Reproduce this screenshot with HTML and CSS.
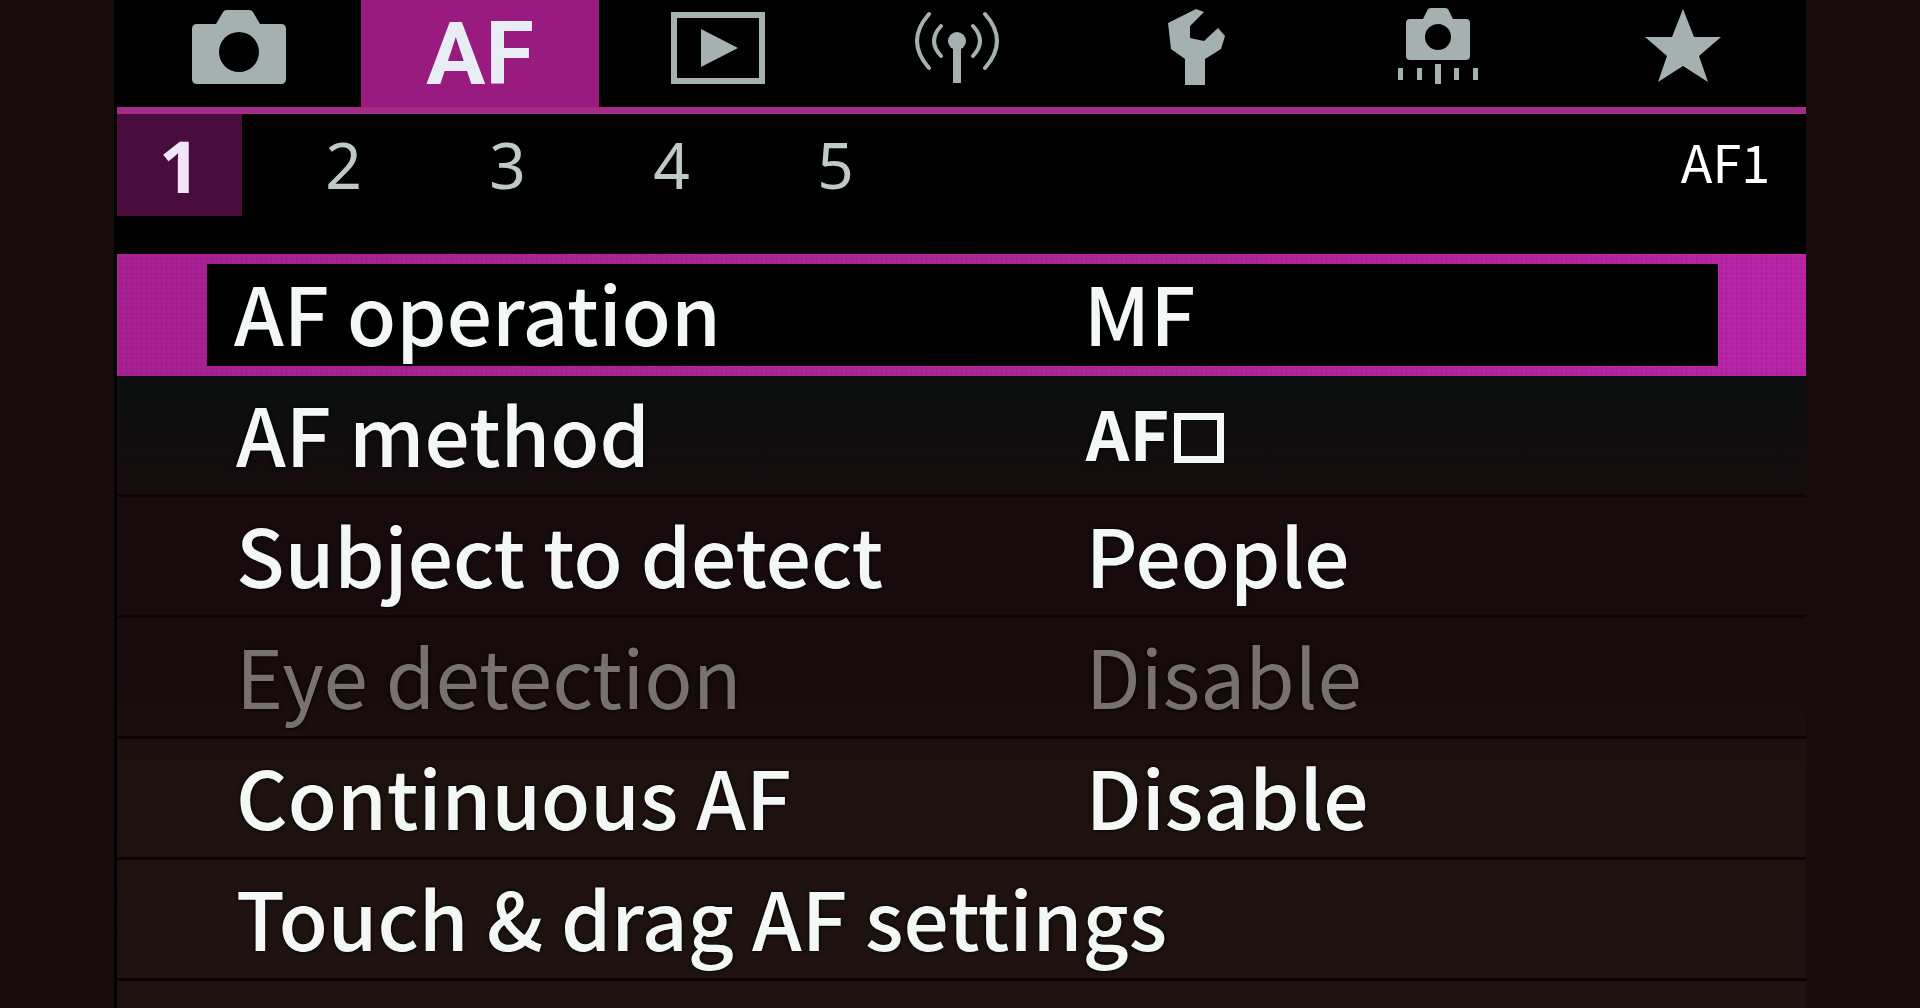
FILE: index.html
```html
<!DOCTYPE html>
<html lang="en">
<head>
  <meta charset="UTF-8" />
  <meta name="viewport" content="width=device-width, initial-scale=1.0"/>
  <title>AF settings</title>
  <link rel="stylesheet" href="styles.css">
</head>
<body>
  <div class="screen">
    <nav class="tabs">
      <button class="tab" aria-label="Shooting">
        <svg width="100" height="80" viewBox="0 0 100 80">
          <path fill-rule="evenodd" d="M8 16H27L34 4Q35 2 38 2H60Q63 2 64 4L71 16H92Q97 16 97 21V71Q97 76 92 76H8Q3 76 3 71V21Q3 16 8 16ZM50 24A20 20 0 1 0 50 64A20 20 0 1 0 50 24Z"/>
        </svg>
      </button>
      <button class="tab active">AF</button>
      <button class="tab" aria-label="Playback">
        <svg width="100" height="80" viewBox="0 0 100 80">
          <rect class="line" x="6" y="7" width="88" height="66" stroke-width="6"/>
          <path d="M33 21L70 40L33 59Z"/>
        </svg>
      </button>
      <button class="tab" aria-label="Wireless">
        <svg width="100" height="80" viewBox="0 0 100 80">
          <circle cx="50" cy="33" r="9"/>
          <rect x="46" y="36" width="8" height="39"/>
          <path class="line" stroke-width="4" stroke-linecap="round" d="M34 18Q20 33 34 48M66 18Q80 33 66 48M22 6Q-2 33 22 60M78 6Q102 33 78 60"/>
        </svg>
      </button>
      <button class="tab" aria-label="Set-up">
        <svg width="60" height="80" viewBox="0 0 60 80">
          <path d="M29 1L37 4L23 18V30L37 33L51 20L58 28L54 41L38 51V77H18V51L4 41L1 15Z"/>
        </svg>
      </button>
      <button class="tab" aria-label="Custom functions">
        <svg width="100" height="80" viewBox="0 0 100 80">
          <path fill-rule="evenodd" d="M22 11H35L39 3Q40 0 43 0H57Q60 0 61 3L65 11H78Q82 11 82 15V48Q82 52 78 52H22Q18 52 18 48V15Q18 11 22 11ZM50 16A13 13 0 1 0 50 42A13 13 0 1 0 50 16Z"/>
          <path d="M10 60h5v12h-5zM29 60h5v12h-5zM47 56h6v20h-6zM66 60h5v12h-5zM85 60h5v12h-5z"/>
        </svg>
      </button>
      <button class="tab" aria-label="My Menu">
        <svg width="80" height="80" viewBox="0 0 80 80">
          <path d="M40 1L51 29H78L56 48L65 74L40 58L15 74L24 48L2 29H29Z"/>
        </svg>
      </button>
    </nav>

    <div class="pages">
      <button class="page active">1</button>
      <button class="page">2</button>
      <button class="page">3</button>
      <button class="page">4</button>
      <button class="page">5</button>
      <span class="page-name">AF1</span>
    </div>

    <div class="menu">
      <button class="row selected"><span class="label">AF operation</span><span class="value">MF</span></button>
      <button class="row"><span class="label">AF method</span><span class="value"><b class="method">AF</b><i class="frame"></i></span></button>
      <button class="row"><span class="label">Subject to detect</span><span class="value">People</span></button>
      <button class="row" disabled><span class="label">Eye detection</span><span class="value">Disable</span></button>
      <button class="row"><span class="label">Continuous AF</span><span class="value">Disable</span></button>
      <button class="row"><span class="label">Touch &amp; drag AF settings</span></button>
    </div>
  </div>
</body>
</html>
```
FILE: styles.css
```css
* {
  box-sizing: border-box;
}

body {
  margin: 0;
  padding: 0 114px;
  min-height: 100vh;
  display: flex;
  background: #180b0d;
  font-family: "Noto Sans CJK JP", "Noto Sans", sans-serif;
}

button {
  margin: 0;
  padding: 0;
  border: none;
  background: none;
  color: inherit;
  font: inherit;
  cursor: pointer;
}

.screen {
  flex: 1;
  display: flex;
  flex-direction: column;
  padding-left: 3px;
  background: #020102;
  color: #f3f8f7;
}

/* top tabs */
.tabs {
  display: grid;
  grid-template-columns: 244fr 238fr 238fr 240fr 240fr 242fr 247fr;
  height: 114px;
  border-bottom: 7px solid #a62a88;
}

.tab {
  display: flex;
  justify-content: center;
  align-items: flex-start;
  padding-top: 8px;
}

.tab.active {
  padding-top: 0;
  background: #991b80;
  color: #e8edf3;
  font-family: Roboto, sans-serif;
  font-size: 88px;
  font-weight: 700;
  line-height: 107px;
}

.tab svg {
  fill: #a5b1b0;
}

.tab .line {
  fill: none;
  stroke: #a5b1b0;
}

/* page numbers */
.pages {
  display: flex;
  align-items: flex-start;
  gap: 39px;
  height: 140px;
  padding-right: 36px;
}

.page {
  width: 125px;
  height: 102px;
  color: #bfcac8;
  font-family: "Noto Sans", sans-serif;
  font-size: 64px;
  line-height: 102px;
}

.page.active {
  background: #490d3d;
  color: #f2e6fa;
  font-size: 72px;
  font-weight: 700;
}

.page-name {
  margin-left: auto;
  color: #fff;
  font-size: 52px;
  line-height: 94px;
}

/* settings list */
.menu {
  flex: 1;
  display: flex;
  flex-direction: column;
  background: linear-gradient(#0d0e0e 20%, #180b0d 34%, #180b0d 58%, #1e120f 68%, #1e1310);
}

.row {
  display: grid;
  grid-template-columns: 44vw 1fr;
  align-items: start;
  height: 121px;
  padding-left: 119px;
  border-bottom: 3px solid #0e0405;
  font-size: 80px;
  font-weight: 500;
  line-height: 112px;
  text-align: left;
  text-shadow: 0 0 4px #000;
  white-space: nowrap;
}

.row.selected {
  height: 122px;
  padding-left: 27px;
  line-height: 94px;
  border: 10px solid transparent;
  border-left-width: 90px;
  border-right-width: 88px;
  /* black inside, magenta pixel grid under the border */
  background:
    linear-gradient(#020102, #020102) padding-box,
    repeating-linear-gradient(#0000 0 4px, #78108033 4px 5px) border-box,
    repeating-linear-gradient(90deg, #0000 0 4px, #78108033 4px 5px) border-box,
    linear-gradient(90deg, #aa2194, #ad2992 50%, #bb25a8) border-box;
}

.row:disabled {
  color: #777270;
  font-weight: 400;
}

.value {
  display: flex;
  align-items: center;
  padding-left: 5px;
}

.method {
  font-size: 68px;
  font-weight: 700;
}

.frame {
  width: 50px;
  height: 50px;
  margin: 12px 0 0 5px;
  border: 7px solid #f3f8f7;
}
```
